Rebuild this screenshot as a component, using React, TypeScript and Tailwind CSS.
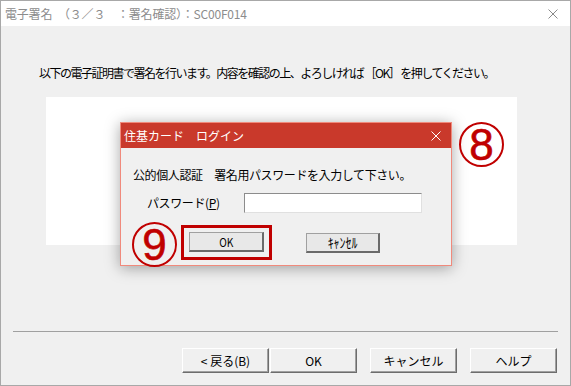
import React from 'react';

const jp = '"Noto Sans CJK JP", "Noto Sans", sans-serif';

function CloseIcon({ color, size = 10 }: { color: string; size?: number }) {
  return (
    <svg width={size} height={size} viewBox="0 0 10 10">
      <path d="M0.5 0.5 L9.5 9.5 M9.5 0.5 L0.5 9.5" stroke={color} strokeWidth="1" />
    </svg>
  );
}

function Circled({ n }: { n: string }) {
  return (
    <div className="flex h-[45px] w-[45px] items-center justify-center rounded-full border-2 border-[#c00000]">
      <span
        className="text-[44px] leading-none text-[#c00000] [-webkit-text-stroke:0.6px_#c00000]"
        style={{ fontFamily: '"Liberation Sans", Arial, sans-serif' }}
      >
        {n}
      </span>
    </div>
  );
}

function WinButton({ label }: { label: string }) {
  return (
    <button className="flex h-[25px] w-[87px] items-center justify-center border border-t-white border-l-white border-r-[#6d6d6d] border-b-[#6d6d6d] bg-[#f0f0f0] text-[12px] text-black shadow-[inset_-1px_-1px_0_#a0a0a0]">
      {label}
    </button>
  );
}

function SmallButton({ label, w, size }: { label: string; w: string; size: string }) {
  return (
    <button
      className={`flex h-[20px] ${w} ${size} items-center justify-center border border-[#a0a0a0] border-r-2 border-b-2 border-r-[#6a6a6a] border-b-[#6a6a6a] bg-[#e8e8e8] leading-none text-black`}
    >
      <span className="inline-block scale-x-[0.85]">{label}</span>
    </button>
  );
}

export default function App() {
  return (
    <div
      className="relative flex h-[386px] w-[571px] flex-col border border-[#a8a8a8] bg-[#f0f0f0] text-black"
      style={{ fontFamily: jp }}
    >
      {/* title bar */}
      <div className="flex h-[25px] items-center justify-between bg-white pl-[4px] pr-[12px]">
        <span className="text-[12px] tracking-[-0.2px] text-[#8c8c8c]">
          電子署名　（３／３　：署名確認）：SC00F014
        </span>
        <CloseIcon color="#8a8a8a" />
      </div>

      {/* body */}
      <div className="flex flex-1 flex-col">
        <p className="mt-[39px] pl-[38px] text-[12px] leading-[16px] tracking-[-1.5px]">
          以下の電子証明書で署名を行います。内容を確認の上、よろしければ ［OK］ を押してください。
        </p>
        <div className="ml-[45px] mt-[16px] h-[148px] w-[471px] bg-white" />
        <div className="mx-[12px] mt-[86px] border-t border-[#a0a0a0]" />
        <div className="mt-[16px] flex pl-[181px]">
          <WinButton label="< 戻る(B)" />
          <div className="ml-[1px]">
            <WinButton label="OK" />
          </div>
          <div className="ml-[13px]">
            <WinButton label="キャンセル" />
          </div>
          <div className="ml-[13px]">
            <WinButton label="ヘルプ" />
          </div>
        </div>
      </div>

      {/* login dialog */}
      <div className="absolute left-[119px] top-[121px] flex h-[144px] w-[332px] flex-col border border-[#f08a7c] bg-[#f0f0f0] shadow-[0_2px_14px_rgba(0,0,0,0.35)]">
        <div className="flex h-[25px] items-center justify-between bg-[#c9392b] pl-[3px] pr-[10px]">
          <span className="text-[12px] text-white">住基カード　ログイン</span>
          <CloseIcon color="#ffffff" />
        </div>
        <div className="flex flex-col pl-[12px]">
          <p className="mt-[19px] text-[12px] leading-[16px] tracking-[-0.4px]">
            公的個人認証　署名用パスワードを入力して下さい。
          </p>
          <div className="mt-[10px] flex items-center">
            <span className="ml-[14px] w-[97px] text-[12px] tracking-[-0.4px]">
              パスワード(<span className="underline">P</span>)
            </span>
            <div className="h-[20px] w-[178px] border border-[#8c8c8c] border-r-[#e0e0e0] border-b-[#e0e0e0] bg-white" />
          </div>
          <div className="mt-[12px] flex items-center">
            <div className="ml-[48px] border-[3px] border-[#c00000] px-[5px] pb-[5px] pt-[4px]">
              <SmallButton label="OK" w="w-[75px]" size="text-[12px]" />
            </div>
            <div className="ml-[34px]">
              <SmallButton label="ｷｬﾝｾﾙ" w="w-[74px]" size="text-[14px]" />
            </div>
          </div>
        </div>
      </div>

      {/* annotations */}
      <div className="absolute left-[458px] top-[121px]">
        <Circled n="8" />
      </div>
      <div className="absolute left-[131px] top-[221px]">
        <Circled n="9" />
      </div>
    </div>
  );
}
